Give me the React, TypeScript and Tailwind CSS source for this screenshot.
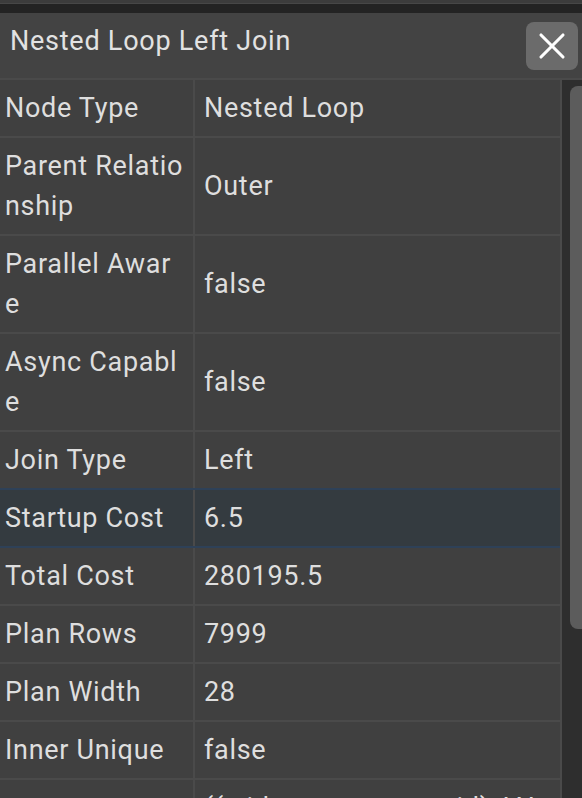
import { X } from 'lucide-react';

const ROWS: { label: string; value: string; active?: boolean }[] = [
  { label: 'Node Type', value: 'Nested Loop' },
  { label: 'Parent Relationship', value: 'Outer' },
  { label: 'Parallel Aware', value: 'false' },
  { label: 'Async Capable', value: 'false' },
  { label: 'Join Type', value: 'Left' },
  { label: 'Startup Cost', value: '6.5', active: true },
  { label: 'Total Cost', value: '280195.5' },
  { label: 'Plan Rows', value: '7999' },
  { label: 'Plan Width', value: '28' },
  { label: 'Inner Unique', value: 'false' },
  { label: 'Join Filter', value: '((c.id = o.customer_id) AND (o.status = \'open\'::text))' },
];

export default function App() {
  return (
    <div
      className="h-[798px] w-[582px] overflow-hidden bg-[#424242] text-[#dedede]"
      style={{ fontFamily: 'Roboto, "Noto Sans", sans-serif' }}
    >
      {/* top strip */}
      <div className="h-[4px] bg-[#3c3c3c] border-b border-[#474747]" />
      <div className="h-[9px] bg-[#232323]" />

      {/* header */}
      <div className="flex h-[65px] items-center justify-between bg-[#434343] pl-[10px] pr-[4px]">
        <h2 className="pb-[8px] text-[27px] leading-none tracking-[0.75px] text-[#e2e2e2]">Nested Loop Left Join</h2>
        <button className="flex h-[48px] w-[52px] items-center justify-center rounded-[8px] bg-[#6b6b6b] text-white">
          <X className="h-[44px] w-[44px]" strokeWidth={1.7} />
        </button>
      </div>
      <div className="h-[2px] bg-[#4a4a4a]" />

      {/* table + scrollbar */}
      <div className="flex">
        <div className="w-[562px] border-r-2 border-[#4a4a4a]">
          {ROWS.map((row) => (
            <div
              key={row.label}
              className={`flex text-[27px] leading-[40px] tracking-[0.7px] ${
                row.active
                  ? 'bg-[#343b40] border-y-2 border-[#2e4158] -mt-[2px]'
                  : 'bg-[#404040] border-b-2 border-[#4a4a4a]'
              }`}
            >
              <div className="flex w-[195px] shrink-0 items-center border-r-2 border-[#4a4a4a] py-[8px] pl-[5px] pr-[9px] break-all">
                {row.label}
              </div>
              <div className="flex flex-1 items-center py-[8px] pl-[9px] pr-[8px] break-all">{row.value}</div>
            </div>
          ))}
        </div>
        <div className="w-[20px] shrink-0 bg-[#2e2e2e] pl-[8px] pt-[6px]">
          <div className="h-[543px] w-[12px] rounded-l-[8px] bg-[#5c5c5c]" />
        </div>
      </div>
    </div>
  );
}
